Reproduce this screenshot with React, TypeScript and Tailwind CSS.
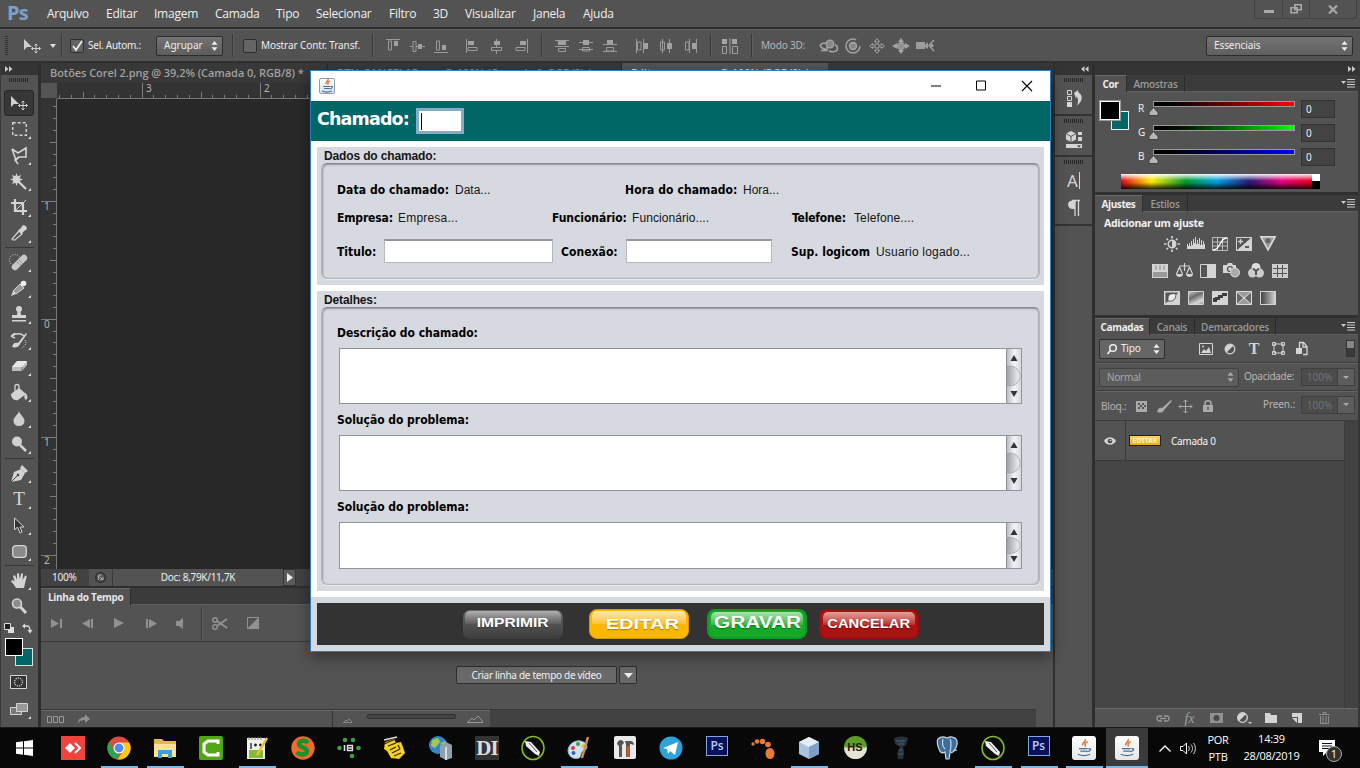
import React from "react";

type P = { children?: React.ReactNode; className?: string };

/* ---------- drawing helpers ---------- */
function Ic({ w = 16, h = 16, className = "", children }: P & { w?: number; h?: number }) {
  return (
    <svg width={w} height={h} viewBox={`0 0 ${w} ${h}`} className={"block shrink-0 overflow-visible " + className} fill="none" stroke="none">
      {children}
    </svg>
  );
}
function Cell({ children, className = "" }: P) {
  return <div className={"flex shrink-0 items-center justify-center " + className}>{children}</div>;
}
function Arrows() {
  return (
    <Ic w={7} h={10}>
      <path d="M3.5 0L6.5 3.8H.5zM3.5 10L.5 6.2h6z" fill="currentColor" />
    </Ic>
  );
}
function Grip({ className = "" }: P) {
  return (
    <Ic w={20} h={4} className={className}>
      {Array.from({ length: 10 }, (_, i) => (
        <path key={i} d={`M${i * 2 + 0.5} 0v4`} stroke="#262626" />
      ))}
    </Ic>
  );
}
function Sep({ className = "" }: P) {
  return <div className={"h-[23px] w-[2px] shrink-0 border-l border-r border-l-[#393939] border-r-[#5e5e5e] " + className} />;
}

/* ---------- menu + options bar ---------- */
const menus: [string, string][] = [
  ["Arquivo", "w-[59px]"], ["Editar", "w-[48px]"], ["Imagem", "w-[61px]"], ["Camada", "w-[61px]"],
  ["Tipo", "w-[40px]"], ["Selecionar", "w-[73px]"], ["Filtro", "w-[44px]"], ["3D", "w-[32px]"],
  ["Visualizar", "w-[68px]"], ["Janela", "w-[50px]"], ["Ajuda", "w-[50px]"],
];

function MenuBar() {
  return (
    <div className="flex h-[29px] shrink-0 border-b-2 border-[#2c2c2c] bg-[#535353]">
      <div className="w-[47px] pl-[7px] font-['Open_Sans',sans-serif] text-[20px] leading-[25px] font-bold tracking-[-0.7px] text-[#7ba2ca]">Ps</div>
      {menus.map(([m, w]) => (
        <div key={m} className={"font-['Open_Sans',sans-serif] text-[12px] leading-[28px] tracking-[-0.25px] whitespace-nowrap text-[#f0f0f0] " + w}>{m}</div>
      ))}
      <div className="mr-[3px] ml-auto flex h-[19px] w-[103px] rounded-b-[3px] border border-t-0 border-[#444] text-[#a9a9a9]">
        <Cell className="w-[28px] border-r border-[#444]"><Ic w={10} h={10}><path d="M0 6h10v3H0z" fill="currentColor" /></Ic></Cell>
        <Cell className="w-[27px] border-r border-[#444]"><Ic w={12} h={10}><path d="M4.8.8h6.4v5H4.8zM1 3.8h6.2v5H1z" stroke="currentColor" strokeWidth="1.6" /></Ic></Cell>
        <Cell className="grow"><Ic w={10} h={9}><path d="M1 .5l8 8M9 .5l-8 8" stroke="currentColor" strokeWidth="2.2" /></Ic></Cell>
      </div>
    </div>
  );
}

const aligns: string[] = [
  "M1 1.5h14 M3.5 3h3v9h-3z|M9 3h4v5H9z",
  "M1 8.5h3 M7 8.5h3M13 8.5h3 M4 3.5h3v10H4z|M9 6h4v5H9z",
  "M1 14.5h14 M3.5 3h3v9h-3z|M9 7h4v5H9z",
  "M1.5 1v14 M3 9.5h9v3H3z|M3 3h6v4H3z",
  "M7.5 1v2M7.5 7v2M7.5 13v3 M2.500 9.500h10v3h-10z|M5 3h6v4H5z",
  "M14.5 1v14 M3 9.500h9v3H3z|M7 3h6v4H7z",
  "M1 2.5h14M1 8.500h14 M4.500 10.500h7v3h-7z|M4 3h8v4H4z",
  "M1 4.500h14M1 11.500h14 M4.500 9.500h7v3.500h-7z|M5 2h6v5H5z",
  "M1 6.500h14M1 13.500h14 M4.500 9.500h7v3.500h-7z|M5 2h6v4H5z",
  "M2.5 1v14M9.5 1v14 M3.500 4h3.500v8H3.500z|M10 5h4v6h-4z",
  "M4.5 1v14M11.500 1v14 M2.500 4h4v8h-4z|M9 5h5v6H9z",
  "M7.5 1v14M14.500 1v14 M3.500 4h3.500v8H3.500z|M10 5h4v6h-4z",
];
function AlignIcon({ i }: { i: number }) {
  const [a, b] = aligns[i].split("|");
  return (
    <Cell className="w-6">
      <Ic><path d={a} stroke="#9b9b9b" /><path d={b} fill="#a2a2a2" /></Ic>
    </Cell>
  );
}
function MoveIcon() {
  return (
    <Ic w={18} h={16}>
      <path d="M1 1v11l3-3h5z" fill="#cfcfcf" />
      <path d="M13 6v9M8.500 10.500h9M11.500 7.500L13 6l1.500 1.500M11.500 13.500L13 15l1.500-1.500M10 9l-1.500 1.500L10 12M16 9l1.500 1.500L16 12" stroke="#cfcfcf" />
    </Ic>
  );
}
function OptionsBar() {
  const t = "font-['Noto_Sans',sans-serif] text-[10px] whitespace-nowrap text-[#ededed] ";
  return (
    <div className="flex h-[34px] shrink-0 items-center border-t border-b-2 border-t-[#646464] border-b-[#303030] bg-[#535353]">
      <Ic w={3} h={20} className="ml-[5px]"><path d="M1.500 0v20" stroke="#333" strokeWidth="3" strokeDasharray="1 1" /></Ic>
      <div className="ml-[15px]"><MoveIcon /></div>
      <Ic w={6} h={4} className="ml-[9px]"><path d="M0 0h6L3 4z" fill="#ddd" /></Ic>
      <Sep className="ml-[5px]" />
      <div className="ml-[7px] flex h-[14px] w-[14px] items-center justify-center rounded-[2px] border border-[#2e2e2e] bg-[#636363]">
        <Ic w={12} h={12}><path d="M2 6l3 4 6-9" stroke="#eee" strokeWidth="1.700" /></Ic>
      </div>
      <div className={t + "ml-[4px] w-[68px] tracking-[-0.25px]"}>Sel. Autom.:</div>
      <div className={t + "flex h-[20px] w-[67px] items-center justify-between rounded-[2px] border border-[#2d2d2d] bg-linear-to-b from-[#737373] to-[#5d5d5d] pr-[4px] pl-[7px]"}>Agrupar<Arrows /></div>
      <Sep className="ml-[9px]" />
      <div className="ml-[9px] h-[14px] w-[14px] rounded-[2px] border border-[#2e2e2e] bg-[#656565]" />
      <div className={t + "ml-[4px] w-[111px] tracking-[-0.1px]"}>Mostrar Contr. Transf.</div>
      <Sep />
      <div className="ml-[7px] flex">{[0, 1, 2].map((i) => <AlignIcon key={i} i={i} />)}</div>
      <div className="ml-[8px] flex">{[3, 4, 5].map((i) => <AlignIcon key={i} i={i} />)}</div>
      <Sep className="ml-[8px]" />
      <div className="ml-[7px] flex">{[6, 7, 8].map((i) => <AlignIcon key={i} i={i} />)}</div>
      <div className="ml-[8px] flex">{[9, 10, 11].map((i) => <AlignIcon key={i} i={i} />)}</div>
      <Sep className="ml-[8px]" />
      <Cell className="ml-[6px] w-6">
        <Ic><path d="M.5 8.500h4v7h-4zM10.500 8.500h5v7h-5zM8 0v16" stroke="#a0a0a0" /><path d="M0 1h5v5H0zM10 1h5v5h-5z" fill="#a5a5a5" /></Ic>
      </Cell>
      <Sep className="ml-[9px]" />
      <div className={t + "ml-[8px] w-[56px] tracking-[-0.2px] !text-[#b5b5b5]"}>Modo 3D:</div>
      <Cell className="w-6"><Ic w={18} h={14}><circle cx="10" cy="5" r="3.800" fill="#888" stroke="#a5a5a5" strokeWidth="1.300" /><path d="M6 4C0 4-1 7 2 9l4 1.500M1 11.500h6v-4M9 12c4 2 9 0 8.500-3C17 7 16 6 15 5.500" stroke="#a5a5a5" strokeWidth="1.500" /></Ic></Cell>
      <Cell className="w-6"><Ic><circle cx="8" cy="8" r="7" stroke="#a0a0a0" strokeWidth="1.600" strokeDasharray="36 8" /><circle cx="8" cy="8" r="3.500" fill="#858585" stroke="#aaa" strokeWidth="1.300" /></Ic></Cell>
      <Cell className="w-6"><Ic><path d="M8 .7L5.500 3.500H7V7H3.500V5.500L.7 8l2.800 2.500V9H7v3.500H5.500L8 15.300l2.500-2.800H9V9h3.500v1.500L15.300 8l-2.800-2.500V7H9V3.500h1.500z" stroke="#a5a5a5" /></Ic></Cell>
      <Cell className="w-6"><Ic w={18}><circle cx="9" cy="8" r="3.500" fill="#909090" stroke="#aaa" /><path d="M9 0L6 4h6zM9 16l-3-4h6zM0 8l5-3v6zM18 8l-5-3v6z" fill="#a2a2a2" /></Ic></Cell>
      <Cell className="w-6"><Ic w={18} h={12}><path d="M0 2h9v7H0zM9 5l3-3v7L9 7z" fill="#9c9c9c" /><path d="M18 0l-5 5.500 5 5.500" stroke="#a5a5a5" strokeWidth="1.300" /><circle cx="16" cy="5.500" r="1.500" fill="#aaa" /></Ic></Cell>
      <div className={t + "mr-[7px] ml-auto flex h-[20px] w-[147px] items-center justify-between rounded-[2px] border border-[#2d2d2d] bg-linear-to-b from-[#747474] to-[#5f5f5f] pr-[4px] pl-[7px] tracking-[-0.1px]"}>Essenciais<Arrows /></div>
    </div>
  );
}

/* ---------- tool palette ---------- */
const G = "#d4d4d4";
const tools: React.ReactNode[] = [
  <MoveIcon />,
  <Ic w={15} h={14}><path d="M.7.700h13.600v12.600H.700z" stroke={G} strokeWidth="1.400" strokeDasharray="3 2" /></Ic>,
  <Ic w={17} h={17}><path d="M1 2l6 4 8-5v9H8L5 13 1 2M8 10l-4 3 3 4" stroke={G} strokeWidth="1.600" /></Ic>,
  <Ic w={18} h={17}><path d="M6.500 0l1.200 3.300L11 2 9.600 5.200 13 6.500 9.600 7.800 11 11 7.700 9.700 6.500 13 5.300 9.700 2 11l1.400-3.200L0 6.500l3.400-1.300L2 2l3.300 1.300z" fill={G} /><path d="M9 9l7 7" stroke={G} strokeWidth="2.200" /></Ic>,
  <Ic><path d="M4 0v12h12M0 4h12v12" stroke={G} strokeWidth="2.200" /><path d="M3 13L15 1" stroke={G} /></Ic>,
  <Ic><path d="M2 15l-1-1 7-8 3 3-7 6z" stroke={G} strokeWidth="1.200" /><path d="M7 5l2-1 3-4 3 1 1 3-4 3-1 2z" fill={G} /></Ic>,
  <Ic w={20} h={17}><circle cx="6" cy="6" r="5.500" stroke={G} strokeDasharray="1 1.500" /><path d="M6 13L15 4" stroke="#c8c8c8" strokeWidth="6.500" strokeLinecap="round" /><path d="M8 8l5 4M10 6l4 4" stroke="#666" strokeDasharray="1 1" /></Ic>,
  <Ic><path d="M0 16l2-5 3 3z" fill={G} /><path d="M2 11l7-7 4 4-8 6z" fill="#999" stroke={G} /><circle cx="12.500" cy="3.500" r="2.800" fill="#eee" /></Ic>,
  <Ic><circle cx="8" cy="3" r="3" fill={G} /><path d="M6.500 5h3l.5 4h5v3H1V9h5zM1 14h14v1.500H1z" fill={G} /></Ic>,
  <Ic w={17}><path d="M1 4c4-3 9-3 12 0M0 4l4-3M0 4l4 2" stroke={G} strokeWidth="1.400" /><path d="M1 15c1-4 3-5 6-4l8-10 1 1-7 10c-1 3-4 4-8 3z" fill={G} /><path d="M14 8c2 3 0 6-3 8" stroke={G} strokeDasharray="1 1.200" /></Ic>,
  <Ic w={17} h={14}><path d="M6 2h10v4l-5 6H1V8z" fill="#bdbdbd" /><path d="M6 2h10l-5 6H1z" fill="#e8e8e8" /><path d="M11 8v4" stroke="#666" /></Ic>,
  <Ic w={18} h={17}><path d="M1 10l8-6 7 6-8 6c-4 1-7-2-7-6z" fill={G} /><path d="M5 9V2c0-2 4-2 4 0v6" stroke={G} strokeWidth="1.300" /><path d="M15 9c3 2 3 5 1 7-2-1-2-4-1-7z" fill={G} /></Ic>,
  <Ic w={12} h={15}><path d="M6 0c1 4 5.500 6 5.500 10A5 5 0 016 15 5 5 0 01.500 10C.500 6 5 4 6 0z" fill="#cfcfcf" /></Ic>,
  <Ic><circle cx="6" cy="5.500" r="5" fill="#cfcfcf" /><path d="M9 9l6 6" stroke={G} strokeWidth="2.500" /></Ic>,
  <Ic w={17} h={17}><path d="M0 17L3 7l7-3 4 4-4 7z" fill={G} /><path d="M0 17l6-6" stroke="#444" /><circle cx="7" cy="10" r="1.300" fill="#444" /><path d="M9 3l2-3 6 6-3 2z" fill={G} /></Ic>,
  <span className="font-['Liberation_Serif',serif] text-[19px] leading-[20px] text-[#d8d8d8]">T</span>,
  <Ic w={12} h={17}><path d="M1.500 1v12l3-3 2.500 6 2-1-2-5h4z" fill="#333" stroke={G} /></Ic>,
  <Ic w={15} h={13}><rect x=".7" y=".7" width="13.600" height="11.600" rx="3" fill="#8a8a8a" stroke={G} strokeWidth="1.300" /></Ic>,
  <Ic w={17} h={17}><path d="M5 16C3 12 1 11 0 9c1-1 3-1 4 1L2 4c1-1 2-1 2.500 0L6 8 6 2c.5-1.500 2-1.500 2 0l.6 5L10 2c.7-1.300 2-1 2 .3L11.500 8 14 4c1-1 2 0 1.500 1.200L13 16z" fill={G} /></Ic>,
  <Ic><circle cx="6" cy="5.500" r="4.500" fill="#8d8d8d" stroke={G} strokeWidth="1.600" /><path d="M9.500 9l5.500 6" stroke={G} strokeWidth="3" /></Ic>,
];
function ToolPalette() {
  return (
    <div className="flex w-[41px] shrink-0 flex-col border-r-[3px] border-l border-r-[#2f2f2f] border-l-[#3a3a3a] bg-[#535353]">
      <div className="h-[12px] bg-[#343434] pt-[3px] pl-[4px]"><Ic w={8} h={6}><path d="M0 0l3.500 3L0 6zM4 0l3.500 3L4 6z" fill="#c8c8c8" /></Ic></div>
      <Grip className="mt-[3px] mb-[8px] ml-[8px]" />
      {tools.map((t, i) => (
        <React.Fragment key={i}>
          {(i === 6 || i === 14 || i === 18) && <div className="mx-[4px] my-[1px] h-px shrink-0 bg-[#363636]" />}
          <div className={"relative mr-[4px] ml-[3px] flex h-[26px] shrink-0 items-center justify-center " + (i === 0 ? "rounded-[3px] border border-[#262626] bg-[#373737]" : "")}>
            {t}
            {i > 0 && i !== 19 && <Ic w={3} h={3} className="absolute right-[3px] bottom-[3px]"><path d="M3 0v3H0z" fill="#ddd" /></Ic>}
          </div>
        </React.Fragment>
      ))}
      <div className="flex h-[16px] shrink-0 items-end justify-between pr-[6px] pb-[2px] pl-[3px]">
        <Ic w={11} h={10}><path d="M4 4h6v6H4z" fill="#ddd" /><path d="M.5.500h6v6h-6z" fill="#222" stroke="#ddd" /></Ic>
        <Ic w={10} h={9}><path d="M2 2h3c2 0 3 1 3 5" stroke="#ddd" strokeWidth="1.300" /><path d="M0 2l3-2.500v5zM5.500 6h5L8 9.500z" fill="#ddd" /></Ic>
      </div>
      <div className="relative h-[33px] shrink-0">
        <div className="absolute top-[13px] left-[14px] h-[18px] w-[18px] border border-[#ddd] bg-[#006666]" />
        <div className="absolute top-[3px] left-[4px] h-[18px] w-[18px] border border-white bg-black" />
      </div>
      <Cell className="h-[27px] pr-[2px]"><Ic w={17} h={14}><path d="M.5.500h16v13H.500z" fill="#333" stroke={G} /><circle cx="8.500" cy="7" r="4" stroke={G} strokeWidth="1.300" strokeDasharray="1.200 1" /></Ic></Cell>
      <Cell className="relative h-[28px] pr-[2px]"><Ic w={18} h={13}><path d="M.5 4.500h11v7H.500z" fill="#777" stroke={G} /><path d="M6.500.500h11v8h-11z" fill="#999" stroke={G} /></Ic><Ic w={3} h={3} className="absolute right-[7px] bottom-[4px]"><path d="M3 0v3H0z" fill="#ddd" /></Ic></Cell>
    </div>
  );
}

/* ---------- document area ---------- */
function HRuler() {
  return (
    <Ic w={980} h={16}>
      <path d="M0 15.500h980" stroke="#777" />
      {Array.from({ length: 24 }, (_, i) => {
        const x = Math.round(3 + i * 11.800) - 0.500;
        const major = i === 7 || i === 17;
        return <path key={i} d={`M${x} 15v${major ? -15 : i === 2 || i === 12 || i === 22 ? -6 : -3}`} stroke="#7c7c7c" />;
      })}
      <text x="89" y="8.500" fontSize="10" fontFamily="Noto Sans" fill="#b5b5b5">3</text>
      <text x="207" y="8.500" fontSize="10" fontFamily="Noto Sans" fill="#b5b5b5">2</text>
    </Ic>
  );
}
function VRuler() {
  return (
    <Ic w={16} h={470}>
      <path d="M15.500 0v470" stroke="#777" />
      {Array.from({ length: 40 }, (_, i) => {
        const y = Math.round(-3 + i * 11.800 - 1.500) + 0.500;
        const k = (i + 1) % 10;
        return y > 0 ? <path key={i} d={`M15 ${y}h${k === 0 ? -15 : k === 5 ? -6 : -3}`} stroke="#7c7c7c" /> : null;
      })}
      {["1", "0", "1", "2"].map((n, i) => (
        <text key={i} x="3" y={111 + i * 118} fontSize="10" fontFamily="Noto Sans" fill="#b5b5b5">{n}</text>
      ))}
    </Ic>
  );
}
function TimelineControls() {
  const c = "#919191";
  return (
    <div className="flex h-[37px] shrink-0 items-center border-b border-[#3a3a3a] text-[#919191]">
      <Cell className="w-[30px]"><Ic w={11} h={9}><path d="M0 0l8 4.500L0 9zM9 0h2v9H9z" fill={c} /></Ic></Cell>
      <Cell className="w-[32px]"><Ic w={11} h={9}><path d="M8 0v9L0 4.500zM9 0h2v9H9z" fill={c} /></Ic></Cell>
      <Cell className="w-[32px]"><Ic w={10} h={10}><path d="M0 0l10 5-10 5z" fill={c} /></Ic></Cell>
      <Cell className="w-[32px]"><Ic w={11} h={9}><path d="M3 0l8 4.500L3 9zM0 0h2v9H0z" fill={c} /></Ic></Cell>
      <Cell className="w-[26px]"><Ic w={8} h={11}><path d="M0 3h3l4-3v11L3 8H0z" fill={c} /></Ic></Cell>
      <Sep className="ml-[8px] !h-[32px]" />
      <Cell className="w-[33px]"><Ic w={16} h={13}><circle cx="3" cy="3" r="2.200" stroke={c} strokeWidth="1.500" /><circle cx="3" cy="10" r="2.200" stroke={c} strokeWidth="1.500" /><path d="M5 4l10 7M5 9l10-7" stroke={c} strokeWidth="2" /></Ic></Cell>
      <Cell className="w-[33px]"><Ic w={12} h={12}><path d="M.5.500h11v11H.500z" stroke={c} /><path d="M12 0v12H0z" fill={c} /></Ic></Cell>
    </div>
  );
}
function DocumentArea() {
  const t = "font-['Noto_Sans',sans-serif] text-[10px] whitespace-nowrap ";
  return (
    <div className="flex w-[1012px] shrink-0 flex-col bg-[#535353]">
      <div className="flex h-[20px] shrink-0 bg-[#383838]">
        <div className="w-[287px] border-r border-[#292929] pl-[9px] font-['Open_Sans',sans-serif] text-[11px] leading-[20px] font-semibold tracking-[-0.06px] whitespace-nowrap text-[#a0a0a0]">Botões Corel 2.png @ 39,2% (Camada 0, RGB/8) *&nbsp; ×</div>
        <div className="w-[294px] border-r border-[#292929] pl-[9px] font-['Open_Sans',sans-serif] text-[11px] leading-[19px] font-semibold tracking-[-0.1px] whitespace-nowrap text-[#909090]">BTN_CANCELAR.png @ 100% (Camada 0, RGB/8) *&nbsp; ×</div>
        <div className="flex w-[206px] justify-between bg-[#535353] pr-[6px] pl-[9px] font-['Open_Sans',sans-serif] text-[11px] leading-[19px] font-semibold tracking-[-0.1px] whitespace-nowrap text-[#ddd]"><span>Editar.png</span><span>@ 100% (RGB/8) *&nbsp; ×</span></div>
      </div>
      <div className="flex h-[16px] shrink-0 bg-[#333]">
        <div className="h-[15px] w-[16px] bg-[#555]" />
        <HRuler />
      </div>
      <div className="flex h-[470px] shrink-0 bg-[#333]">
        <VRuler />
        <div className="grow bg-[#282828]" />
      </div>
      <div className={t + "flex h-[17px] shrink-0 items-center bg-[#424242] text-[#f0f0f0]"}>
        <div className="w-[48px] pl-[11px] tracking-[-0.2px]">100%</div>
        <Cell className="h-full w-[24px] border-r border-[#3a3a3a] bg-[#535353]"><Ic w={11} h={11}><circle cx="5.500" cy="5.500" r="4.800" stroke="#2a2a2a" strokeWidth="1.200" /><path d="M3.500 8V3h3M4.500 4.500l3 3H5.500M8 5v3" stroke="#aaa" /></Ic></Cell>
        <div className="flex h-full w-[170px] items-center justify-center bg-[#535353] tracking-[-0.3px]">Doc: 8,79K/11,7K</div>
        <Cell className="h-full w-[13px] border border-[#353535] bg-[#5c5c5c]"><Ic w={6} h={9}><path d="M0 0l6 4.500L0 9z" fill="#eee" /></Ic></Cell>
      </div>
      <div className="h-[2px] shrink-0 bg-[#2e2e2e]" />
      <div className="flex h-[17px] shrink-0 border-b border-[#5e5e5e] bg-[#3b3b3b]">
        <div className="h-[17px] w-[90px] border-t border-r border-t-[#666] border-r-[#2a2a2a] bg-[#535353] pl-[7px] font-['Open_Sans',sans-serif] text-[10px] leading-[16px] font-bold tracking-[-0.3px] whitespace-nowrap text-[#e6e6e6]">Linha do Tempo</div>
      </div>
      <TimelineControls />
      <div className="flex h-[67px] shrink-0 pt-[24px] pl-[415px]">
        <div className={t + "flex h-[18px] w-[161px] items-center justify-center rounded-[2px] border border-[#2e2e2e] bg-[#696969] tracking-[-0.3px] text-[#f0f0f0]"}>Criar linha de tempo de vídeo</div>
        <Cell className="ml-[2px] h-[18px] w-[18px] rounded-[2px] border border-[#2e2e2e] bg-[#696969]"><Ic w={9} h={5}><path d="M0 0h9L4.500 5z" fill="#eee" /></Ic></Cell>
      </div>
      <div className="mr-[17px] flex h-[18px] grow border-t border-[#363636] bg-[#424242]">
        <div className="flex w-[449px] items-center border-t border-[#686868] bg-[#535353]">
          <Ic w={17} h={7} className="ml-[6px]"><path d="M.5.500h4v6h-4zM6.500.500h4v6h-4zM12.500.500h4v6h-4z" stroke="#999" /></Ic>
          <Ic w={13} h={10} className="ml-[13px]"><path d="M1 10c0-5 3-7 7-7V0l5 5-5 4V6C4 6 2 7 1 10z" fill="#909090" /></Ic>
          <div className="ml-[242px] h-full w-px bg-[#333]" />
          <Ic w={9} h={5} className="mt-[2px] ml-[10px]"><path d="M0 4.500h9M1 4l2-2 1 1 2-2 3 3" stroke="#888" /></Ic>
          <div className="mb-[5px] ml-[15px] h-[5px] w-[89px] rounded-[2px] border border-[#303030] bg-[#444]" />
          <Ic w={16} h={8} className="ml-[11px]"><path d="M0 7.500h16M1 7l4-4 2 2 4-4 5 6" stroke="#999" /></Ic>
        </div>
      </div>
    </div>
  );
}

/* ---------- right side panels ---------- */
function Dock() {
  return (
    <div className="flex w-[42px] shrink-0 flex-col border-r-[3px] border-l-2 border-[#2f2f2f] bg-[#535353]">
      <div className="flex h-[12px] shrink-0 items-center justify-end bg-[#343434] pr-[3px]"><Ic w={8} h={6}><path d="M3.500 0L0 3l3.500 3zM7.500 0L4 3l3.500 3z" fill="#c8c8c8" /></Ic></div>
      <div className="flex h-[41px] flex-col items-center border-b-2 border-[#333] pt-[3px]">
        <Grip />
        <Ic w={16} h={18} className="mt-[8px]"><path d="M1.500.500h4v4h-4zM1.500 6.500h4v4h-4z" stroke={G} /><path d="M1 12h5v5H1z" fill={G} /><path d="M8 3l4-3 .5 2.500c5 3 4 9-1.500 13 1.500-4 1.500-7-.5-9l-.5 2z" fill={G} /></Ic>
      </div>
      <div className="flex h-[41px] flex-col items-center border-b-2 border-[#333] pt-[3px]">
        <Grip />
        <Ic w={16} h={17} className="mt-[8px]"><path d="M5 0l5 2.500v6L5 11 0 8.500v-6z" fill={G} /><path d="M0 2.500l5 3 5-3M5 5.500V11" stroke="#555" /><path d="M12 1h4v3h-4zM12 6h4v4h-4zM0 13h16v4H0z" fill={G} /><path d="M11 14.500h4l-2 2z" fill="#333" /></Ic>
      </div>
      <div className="flex h-[69px] flex-col items-center border-b-2 border-[#333] pt-[3px]">
        <Grip />
        <div className="mt-[8px] flex h-[17px] items-center font-['Noto_Sans',sans-serif] text-[17px] text-[#d4d4d4]">A<span className="ml-px h-[17px] w-px bg-[#d4d4d4]" /></div>
        <Ic w={12} h={16} className="mt-[11px]"><path d="M11 .500H5C2 .500 0 2 0 4.500S2 9 5 9h2V.500z" fill={G} /><path d="M7 0v16M10.500 0v16M4 .500h8" stroke={G} strokeWidth="1.300" /></Ic>
      </div>
    </div>
  );
}
function Tabs({ items }: { items: [string, string][] }) {
  return (
    <div className="flex h-[17px] shrink-0 bg-[#3b3b3b] font-['Open_Sans',sans-serif] text-[10px] leading-[16px] whitespace-nowrap">
      {items.map(([n, w], i) => (
        <div key={n} className={"border-r border-[#2c2c2c] text-center " + w + (i === 0 ? " border-t border-t-[#6a6a6a] bg-[#535353] font-bold tracking-[-0.4px] text-[#eee]" : " border-b border-b-[#5e5e5e] pt-px font-semibold tracking-[-0.25px] text-[#9a9a9a]")}>{n}</div>
      ))}
      <div className="flex grow items-center justify-end border-b border-[#5e5e5e] pr-[3px]">
        <Ic w={14} h={8}><path d="M0 2h5L2.500 5z" fill="#ccc" /><path d="M6 .5h8M6 3h8M6 5.500h8M6 8h8" stroke="#ccc" /></Ic>
      </div>
    </div>
  );
}
function Channel({ l, bar }: { l: string; bar: string }) {
  return (
    <div className="flex h-[24px] items-start font-['Noto_Sans',sans-serif] text-[10px] text-[#eee]">
      <div className="w-[15px] pt-[1px] leading-[14px]">{l}</div>
      <div className="w-[148px]">
        <div className={"mt-[1px] h-[6px] w-[142px] border border-[#9a9a9a] bg-linear-to-r from-black " + bar} />
        <Ic w={11} h={9} className="-ml-[5px]"><path d="M5.500.500l4.500 5v3H1v-3z" fill="#b5b5b5" stroke="#333" strokeWidth=".8" /></Ic>
      </div>
      <div className="h-[18px] w-[34px] border border-[#333] bg-[#434343] pl-[4px] leading-[16px]">0</div>
    </div>
  );
}
const adj: React.ReactNode[][] = [
  [
    <Ic w={18} h={16}><circle cx="9" cy="8" r="3.700" stroke={G} strokeWidth="1.500" /><path d="M9 4a4 4 0 010 8z" fill={G} /><path d="M9 0v2.500M9 13.500V16M1 8h2.500M14.500 8H17M3.500 2.500L5 4M13 12l1.500 1.500M3.500 13.500L5 12M13 4l1.500-1.500" stroke={G} strokeWidth="1.700" /></Ic>,
    <Ic w={18} h={13}><path d="M0 12h18V7h-1V4h-1v4h-1V3h-1v5h-1V1h-1v6h-1V3h-1v4H9V0H8v6H7V2H6v6H5V4H4v5H3V6H2v3H1V7H0z" fill={G} /></Ic>,
    <Ic w={16} h={14}><path d="M.5.500h15v13H.500zM5.500 0v14M10.500 0v14M0 5h16M0 9h16" stroke="#bbb" /><path d="M1 13C9 13 7 1 15 1" stroke="#fff" strokeWidth="1.300" /></Ic>,
    <Ic w={16} h={14}><path d="M.5.500h15v13H.500z" stroke={G} /><path d="M16 0v14H0z" fill={G} /><path d="M2 4.500h5M4.500 2v5" stroke={G} strokeWidth="1.300" /><path d="M9 10h4" stroke="#333" strokeWidth="1.500" /></Ic>,
    <Ic w={16} h={15}><path d="M.8.700h14.400L8 14z" fill="#9a9a9a" stroke="#ddd" strokeWidth="1.500" /><circle cx="8" cy="4.800" r="2.500" fill="#636363" /></Ic>,
  ],
  [
    <Ic w={16} h={14}><path d="M0 0h16v14H0z" fill={G} /><path d="M4 1v5M8 1v5M12 1v5" stroke="#888" /><path d="M1 8h14v5H1z" fill="#999" /></Ic>,
    <Ic w={17} h={15}><path d="M8.500 0v5M3 3h11M3.500 4l-3 7M3.500 4l3 7M13.500 4l-3 7M13.500 4l3 7M8.500 3v5" stroke={G} strokeWidth="1.200" /><path d="M0 11h7c0 4-7 4-7 0zM10 11h7c0 4-7 4-7 0z" fill={G} /></Ic>,
    <Ic w={16} h={14}><path d="M.5.500h15v13H.500z" fill="#555" stroke={G} /><path d="M7 0h9v14H7z" fill={G} /></Ic>,
    <Ic w={18} h={15}><path d="M0 2h4l1-2h4l1 2h3v8H0z" fill={G} /><circle cx="7" cy="6" r="2.500" stroke="#444" strokeWidth="1.200" /><circle cx="12" cy="9.500" r="4.500" fill="#aaa" stroke="#ddd" /></Ic>,
    <Ic w={16} h={15}><circle cx="8" cy="4.500" r="4.500" fill="#ddd" /><circle cx="4.500" cy="10" r="4.500" fill="#ccc" /><circle cx="11.500" cy="10" r="4.500" fill="#ccc" /><path d="M8 12V8M8 8L5 5.500M8 8l3-2.500" stroke="#555" strokeWidth="2" /></Ic>,
    <Ic w={16} h={14}><path d="M0 0h16v14H0z" fill="#ccc" /><path d="M5.500 1v12M10.500 1v12M1 4.500h14M1 9.500h14" stroke="#555" /></Ic>,
  ],
  [
    <Ic w={16} h={14}><path d="M0 0h16v14H0z" fill={G} /><path d="M1.500 1.500h13l-13 11z" fill="#555" /><path d="M4 7c0-4 4-5 8-4 0 5-3 8-8 7z" fill="#eee" stroke="#555" /></Ic>,
    <Ic w={16} h={14}><defs><linearGradient id="bands" x1="0" y1="0" x2=".5" y2=".9" spreadMethod="reflect"><stop offset="0" stopColor="#d0d0d0" /><stop offset=".5" stopColor="#6a6a6a" /><stop offset="1" stopColor="#d8d8d8" /></linearGradient></defs><path d="M.5.500h15v13H.500z" fill="url(#bands)" stroke={G} /></Ic>,
    <Ic w={16} h={14}><path d="M0 0h16v14H0z" fill={G} /><path d="M1 7h2V6h3V4h4V2h5v3h-4v2H8v2H5v2H1z" fill="#3c3c3c" /></Ic>,
    <Ic w={16} h={14}><path d="M0 0h16v14H0z" fill="#999" /><path d="M1 1v12l6-6zM15 1v12L9 7z" fill="#666" /><path d="M.5.500h15v13H.500zM.500.500l15 13M15.500.500l-15 13" stroke="#ddd" /></Ic>,
    <div className="h-[14px] w-[16px] border border-[#d4d4d4] bg-linear-to-r from-[#444] to-[#d0d0d0]" />,
  ],
];
function ColorPanel() {
  return (
    <div className="flex h-[100px] shrink-0 flex-col">
      <div className="flex pt-[8px]">
        <div className="relative ml-[5px] h-[32px] w-[38px]">
          <div className="absolute top-[11px] left-[11px] h-[19px] w-[18px] border border-[#eee] bg-[#006666]" />
          <div className="absolute top-[1px] left-0 h-[19px] w-[20px] border border-white bg-black outline outline-[#999]" />
        </div>
        <div>
          <Channel l="R" bar="to-[#ff0000]" />
          <Channel l="G" bar="to-[#00ff00]" />
          <Channel l="B" bar="to-[#0000ff]" />
        </div>
      </div>
      <div className="mt-[2px] ml-[26px] flex h-[15px] w-[199px]">
        <div className="grow bg-[linear-gradient(to_bottom,rgba(255,255,255,0.95)_0%,transparent_45%,transparent_55%,rgba(0,0,0,0.85)_100%),linear-gradient(to_right,#e2001a_0%,#ffec00_16%,#009a2e_34%,#00a0e3_50%,#2b1a78_67%,#e5007d_84%,#e2001a_100%)]" />
        <div className="w-[8px] bg-black"><div className="h-[7px] bg-white" /></div>
      </div>
    </div>
  );
}
function LayersPanel() {
  const t = "font-['Noto_Sans',sans-serif] text-[10px] whitespace-nowrap ";
  const pct = (
    <div className="flex h-[18px] w-[54px] border border-[#3f3f3f] text-[#727272]">
      <div className="w-[35px] bg-[#4c4c4c] text-center leading-[16px]">100%</div>
      <Cell className="grow border-l border-[#3f3f3f] bg-[#5d5d5d]"><Ic w={6} h={3}><path d="M0 0h6L3 3z" fill="#aaa" /></Ic></Cell>
    </div>
  );
  return (
    <div className={t + "flex grow flex-col"}>
      <div className="flex h-[28px] shrink-0 items-center border-b border-[#3d3d3d] text-[#f0f0f0]">
        <div className="ml-[4px] flex h-[20px] w-[66px] items-center rounded-[2px] border border-[#2d2d2d] bg-[#666] pr-[4px] pl-[7px]">
          <Ic w={10} h={10}><circle cx="6" cy="4" r="3.300" stroke="#eee" strokeWidth="1.500" /><path d="M3.500 6.500L.500 10" stroke="#eee" strokeWidth="1.800" /></Ic>
          <span className="mr-auto ml-[4px] tracking-[-0.2px]">Tipo</span><Arrows />
        </div>
        <Cell className="ml-[29px] w-6"><Ic w={14} h={12}><path d="M.5.500h13v11H.500z" stroke={G} /><path d="M2 10l3-4 2 2 3-4 2 6z" fill={G} /><circle cx="4" cy="3.500" r="1" fill={G} /></Ic></Cell>
        <Cell className="w-6"><Ic w={12} h={12}><circle cx="6" cy="6" r="4.800" stroke={G} strokeWidth="1.300" /><path d="M9.500 2.500A5 5 0 002.500 9.500z" fill={G} /></Ic></Cell>
        <Cell className="w-6"><span className="font-['Liberation_Serif',serif] text-[16px] font-bold text-[#d4d4d4]">T</span></Cell>
        <Cell className="w-6"><Ic w={13} h={13}><path d="M2 2h9v9H2zM.500.500h3v3h-3zM9.500.500h3v3h-3zM.500 9.500h3v3h-3zM9.500 9.500h3v3h-3z" stroke={G} /></Ic></Cell>
        <Cell className="w-6"><Ic w={12} h={13}><path d="M3.500 7V.500h4l3.500 4v8H7M7 .500V5h4" stroke={G} strokeWidth="1.300" /><path d="M0 6h6v6H0z" fill={G} /></Ic></Cell>
        <div className="mr-[3px] ml-auto h-[17px] w-[9px] border border-[#333] bg-[#3a3a3a]"><div className="h-[7px] bg-[#888]" /></div>
      </div>
      <div className="flex h-[28px] shrink-0 items-center border-t border-b border-t-[#666] border-b-[#3d3d3d] text-[#a6a6a6]">
        <div className="ml-[4px] flex h-[19px] w-[140px] items-center justify-between rounded-[2px] border border-[#404040] bg-[#5c5c5c] pr-[4px] pl-[7px] tracking-[-0.3px]">Normal<Arrows /></div>
        <div className="w-[62px] pb-px pl-[5px] tracking-[-0.3px] text-[#b5b5b5]">Opacidade:</div>
        {pct}
      </div>
      <div className="flex h-[30px] shrink-0 items-center border-t border-b border-t-[#666] border-b-[#3d3d3d] text-[#b5b5b5]">
        <div className="w-[34px] pl-[6px] tracking-[-0.2px]">Bloq.:</div>
        <Cell className="w-[25px]"><Ic w={11} h={11}><path d="M0 0h11v11H0z" fill="#aaa" /><path d="M2 2h2v2H2zM6 2h2v2H6zM4 4h2v2H4zM8 4h2v2H8zM2 6h2v2H2zM6 6h2v2H6z" fill="#555" /></Ic></Cell>
        <Cell className="w-[20px]"><Ic w={15} h={13}><path d="M0 12c1-4 3-5 5-4l9-8 1 1-8 9c-1 3-4 3-7 2z" fill="#aaa" /></Ic></Cell>
        <Cell className="w-[23px]"><Ic w={13} h={13}><path d="M6.500 0v13M0 6.500h13M4.500 2l2-2 2 2M4.500 11l2 2 2-2M2 4.500l-2 2 2 2M11 4.500l2 2-2 2" stroke="#aaa" /></Ic></Cell>
        <Cell className="w-[22px]"><Ic w={10} h={12}><path d="M0 5h10v7H0z" fill="#aaa" /><path d="M2 5V3c0-3 6-3 6 0v2" stroke="#aaa" strokeWidth="1.500" /><path d="M5 7v3" stroke="#555" strokeWidth="1.500" /></Ic></Cell>
        <div className="ml-[44px] w-[38px] pb-[3px] tracking-[-0.1px]">Preen.:</div>
        <div className="pb-[3px]">{pct}</div>
      </div>
      <div className="flex grow bg-[#464646]">
        <div className="flex grow flex-col">
          <div className="flex h-[40px] items-center border-b border-[#3a3a3a] bg-[#535353] text-[#f4f4f4]">
            <Cell className="h-full w-[31px] border-r border-[#3a3a3a]"><Ic w={12} h={8}><path d="M0 4c3-5 9-5 12 0-3 5-9 5-12 0z" fill={G} /><circle cx="6" cy="4" r="2.300" fill="#444" /><circle cx="6.500" cy="3.300" r=".9" fill="#ddd" /></Ic></Cell>
            <div className="ml-[3px] flex h-[11px] w-[32px] items-center justify-center border border-[#1f1f1f] bg-linear-to-b from-[#ffd25a] to-[#f5ab00] text-[7px] leading-[7px] font-bold text-[#fff3c8]">EDITAR</div>
            <div className="ml-[10px] pt-px tracking-[-0.3px]">Camada 0</div>
          </div>
        </div>
        <div className="w-[14px] border-l border-[#3c3c3c] bg-[#424242]" />
      </div>
      <div className="flex h-[19px] shrink-0 items-center border-t border-[#6a6a6a] pl-[54px]">
        <Cell className="w-[27px]"><Ic w={14} h={7}><path d="M6 1H3.500a2.500 2.500 0 000 5H6M8 1h2.500a2.500 2.500 0 010 5H8M4 3.500h6" stroke="#999" strokeWidth="1.300" /></Ic></Cell>
        <Cell className="w-[27px] font-['Liberation_Serif',serif] text-[14px] text-[#a0a0a0] italic">fx</Cell>
        <Cell className="w-[27px]"><Ic w={13} h={10}><path d="M0 0h13v10H0z" fill="#909090" /><circle cx="6.500" cy="5" r="3" fill="#484848" /></Ic></Cell>
        <Cell className="w-[27px]"><Ic w={14} h={12}><circle cx="5.500" cy="5.500" r="4.800" stroke={G} strokeWidth="1.300" /><path d="M9 2A5 5 0 002 9z" fill={G} /><path d="M11 10h4l-2 2z" fill={G} /></Ic></Cell>
        <Cell className="w-[27px]"><Ic w={12} h={10}><path d="M0 0h5l1 2h6v8H0z" fill={G} /></Ic></Cell>
        <Cell className="w-[27px]"><Ic w={11} h={11}><path d="M0 0h10v10H6V4H0z" fill={G} /><path d="M0 5h5v5z" fill={G} /></Ic></Cell>
        <Cell className="w-[27px]"><Ic w={11} h={12}><path d="M0 2.500h11M4 2V.500h3V2M1.500 4v7.500h8V4M4 4v7M7 4v7" stroke="#8c8c8c" /></Ic></Cell>
      </div>
    </div>
  );
}
function RightPanels() {
  return (
    <div className="flex grow flex-col border-r-2 border-[#383838] bg-[#535353]">
      <div className="flex h-[12px] shrink-0 items-center justify-end bg-[#343434] pr-[2px]"><Ic w={8} h={6}><path d="M0 0l3.500 3L0 6zM4 0l3.500 3L4 6z" fill="#c8c8c8" /></Ic></div>
      <Tabs items={[["Cor", "w-[32px]"], ["Amostras", "w-[58px]"]]} />
      <ColorPanel />
      <div className="h-[3px] shrink-0 bg-[#303030]" />
      <Tabs items={[["Ajustes", "w-[48px]"], ["Estilos", "w-[45px]"]]} />
      <div className="flex h-[106px] shrink-0 flex-col border-b-[3px] border-[#303030]">
        <div className="mt-[4px] ml-[9px] font-['Open_Sans',sans-serif] text-[10.500px] leading-[14px] font-bold tracking-[-0.3px] whitespace-nowrap text-[#f2f2f2]">Adicionar um ajuste</div>
        {adj.map((r, i) => (
          <div key={i} className={"flex h-[27px] " + (i === 1 ? "ml-[53px]" : "ml-[65px]")}>
            {r.map((ic, k) => <Cell key={k} className="w-6">{ic}</Cell>)}
          </div>
        ))}
      </div>
      <Tabs items={[["Camadas", "w-[55px]"], ["Canais", "w-[45px]"], ["Demarcadores", "w-[81px]"]]} />
      <LayersPanel />
    </div>
  );
}

/* ---------- dialog window ---------- */
function Java({ className = "" }: P) {
  return (
    <Ic w={16} h={16} className={className}>
      <path d="M9 1c1 2-3 3-2 5M11 3c-3 1-2 2-2 4" stroke="#e2683c" strokeWidth="1.300" />
      <path d="M4 8.500h7M5 10.500h5.500M11.500 8.500c3-.5 2 2-1 2.500M3 13c3 1.300 7 1.300 10 0" stroke="#4a708f" strokeWidth="1.200" />
    </Ic>
  );
}
function L({ children, className = "" }: P) {
  return <span className={"shrink-0 font-['DejaVu_Sans_Condensed','DejaVu_Sans',sans-serif] text-[12px] font-bold whitespace-nowrap text-black " + className}>{children}</span>;
}
function V({ children, className = "" }: P) {
  return <span className={"shrink-0 font-['Liberation_Sans',sans-serif] text-[12px] whitespace-nowrap text-[#151515] " + className}>{children}</span>;
}
function Field({ className = "" }: P) {
  return <div className={"-mt-[2px] h-[24px] shrink-0 border border-t-2 border-[#b5b8be] border-t-[#94979d] bg-white " + className} />;
}
function TextArea({ label, h, area }: { label: string; h: number; area: string }) {
  return (
    <div className="flex flex-col">
      <div className="flex h-[29px] items-center pb-[2px] pl-[15px]"><L className="tracking-[-0.02px]">{label}</L></div>
      <div className={"ml-[17px] flex w-[683px] border border-[#8f939b] bg-white " + area}>
        <div className="grow" />
        <div className="w-[15px] overflow-hidden border-l border-[#8f939b] bg-[#dfe1e6]">
          <Ic w={14} h={h}>
            <defs>
              <linearGradient id="knob" x1="0" x2="1" y1="0" y2="0"><stop offset="0" stopColor="#6f737b" /><stop offset="1" stopColor="#f4f5f7" /></linearGradient>
              <linearGradient id="track" x1="0" x2="1" y1="0" y2="0"><stop offset="0" stopColor="#b9bcc2" /><stop offset=".5" stopColor="#f2f3f5" /><stop offset="1" stopColor="#d6d9df" /></linearGradient>
            </defs>
            <rect width="14" height={h} fill="url(#track)" />
            <path d="M7 6l3.500 6h-7z" fill="#333" />
            <path d={`M7 ${h - 6}l3.500-6h-7z`} fill="#333" />
            <ellipse cx="3" cy={h / 2} rx="10" ry={h > 50 ? 10 : 8} fill="url(#knob)" stroke="#9a9da3" strokeWidth=".7" />
          </Ic>
        </div>
      </div>
    </div>
  );
}
function Btn({ children, className = "", shine = "" }: P & { shine?: string }) {
  return (
    <div className={"relative flex shrink-0 items-center justify-center overflow-hidden font-['Liberation_Sans',sans-serif] font-bold whitespace-nowrap text-white [text-shadow:0_1px_1px_rgba(0,0,0,0.35)] " + className}>
      <div className={"absolute inset-x-[2px] top-[1px] h-[13px] rounded-t-[5px] bg-linear-to-b " + shine} />
      <span className="relative inline-block">{children}</span>
    </div>
  );
}
const groove = "flex flex-col rounded-[6px] border border-[#b4b7bd] border-t-[#82858b] shadow-[inset_1px_1px_2px_rgba(0,0,0,0.3),inset_-1px_0_1px_rgba(0,0,0,0.18),0_1px_0_#e8eaee]";

function Dialog() {
  return (
    <div className="absolute top-[70px] left-[310px] flex h-[582px] w-[741px] flex-col border border-[#2b7fc7] bg-white shadow-[0_5px_14px_rgba(0,0,0,0.4)]">
      <div className="flex h-[30px] shrink-0 items-center">
        <div className="ml-[8px] flex h-[16px] w-[16px] items-center justify-center rounded-[2px] border border-[#8b9eb3] bg-linear-to-b from-white to-[#dbe3ea]"><Java /></div>
        <div className="ml-auto flex text-black">
          <Cell className="w-[45px] pl-px"><Ic w={11} h={11}><path d="M0 5h10" stroke="#000" /></Ic></Cell>
          <Cell className="w-[46px]"><Ic w={11} h={11}><path d="M.5 0h9v9h-9z" stroke="#000" /></Ic></Cell>
          <Cell className="w-[46px] pr-px"><Ic w={10} h={10}><path d="M0 0l10 10M10 0L0 10" stroke="#000" strokeWidth="1.100" /></Ic></Cell>
        </div>
      </div>
      <div className="flex h-[40px] shrink-0 items-center bg-[#006666] pl-[6px]">
        <div className="w-[99px] pb-[3px] font-['DejaVu_Sans',sans-serif] text-[17.500px] font-bold tracking-[-0.85px] text-white">Chamado:</div>
        <div className="h-[26px] w-[48px] border-[3px] border-[#86abc4] bg-white pt-[2px] pl-[2px]"><div className="h-[17px] w-px bg-black" /></div>
      </div>
      <div className="mx-[6px] mt-[6px] flex h-[138px] shrink-0 flex-col bg-[#d6d9df] px-[4px] pb-[6px]">
        <div className="h-[16px] pl-[3px]"><V className="block leading-[18px] font-bold tracking-[-0.14px]">Dados do chamado:</V></div>
        <div className={groove + " grow pt-[12px] pl-[15px]"}>
          <div className="flex h-[28px] items-center">
            <L className="w-[118px] tracking-[0.09px]">Data do chamado:</L><V className="w-[170px]">Data...</V>
            <L className="w-[118px] tracking-[0.09px]">Hora do chamado:</L><V>Hora...</V>
          </div>
          <div className="flex h-[28px] items-center">
            <L className="w-[61px] tracking-[-0.15px]">Empresa:</L><V className="w-[154px] tracking-[0.2px]">Empresa...</V>
            <L className="w-[80px] tracking-[-0.05px]">Funcionário:</L><V className="w-[160px] tracking-[0.07px]">Funcionário....</V>
            <L className="w-[62px] tracking-[-0.2px]">Telefone:</L><V className="tracking-[0.12px]">Telefone....</V>
          </div>
          <div className="flex h-[40px] items-center">
            <L className="w-[47px]">Titulo:</L><Field className="w-[169px]" />
            <L className="ml-[8px] w-[65px] tracking-[0.05px]">Conexão:</L><Field className="w-[146px]" />
            <L className="ml-[19px] w-[85px] tracking-[0.03px]">Sup. logicom</L><V className="tracking-[0.2px]">Usuario logado...</V>
          </div>
        </div>
      </div>
      <div className="mx-[6px] mt-[6px] flex h-[300px] shrink-0 flex-col bg-[#d6d9df] px-[4px] pb-[6px]">
        <div className="h-[16px] pl-[3px]"><V className="block leading-[18px] font-bold tracking-[-0.14px]">Detalhes:</V></div>
        <div className={groove + " grow gap-[2px] pt-[11px]"}>
          <TextArea label="Descrição do chamado:" h={54} area="h-[56px]" />
          <TextArea label="Solução do problema:" h={54} area="h-[56px]" />
          <TextArea label="Solução do problema:" h={45} area="h-[47px]" />
        </div>
      </div>
      <div className="mt-[6px] flex grow bg-[#d6d9df] p-[6px]">
        <div className="flex grow bg-[#333] pl-[146px]">
          <Btn shine="from-[#b0b0b0] to-[#5c5c5c]" className="mt-[7px] h-[29px] w-[100px] rounded-[7px] bg-linear-to-b from-[#666] to-[#3d3d3d] pb-[4px] text-[12px]"><span className="inline-block scale-x-[1.300]">IMPRIMIR</span></Btn>
          <Btn shine="from-[#ffe9a8] to-[#fcc231]" className="mt-[6px] ml-[26px] h-[30px] w-[100px] rounded-[8px] border border-[#d99a00] bg-[#fbb800] pl-[6px] text-[15px]"><span className="inline-block scale-x-[1.340]">EDITAR</span></Btn>
          <Btn shine="from-[#a6e3ae] to-[#2fb841]" className="mt-[6px] ml-[18px] h-[30px] w-[100px] rounded-[8px] border-2 border-[#0f9a22] bg-[#12aa27] pb-[2px] text-[16px]"><span className="inline-block scale-x-[1.300]">GRAVAR</span></Btn>
          <Btn shine="from-[#e2a0a0] to-[#b82c2c]" className="mt-[6px] ml-[12px] h-[30px] w-[100px] rounded-[7px] border-2 border-[#980f0f] bg-[#ac1212] text-[12px]"><span className="inline-block scale-x-[1.230]">CANCELAR</span></Btn>
        </div>
      </div>
    </div>
  );
}

/* ---------- taskbar ---------- */
const PsI = <div className="mb-[3px] h-[20px] w-[22px] border border-[#7aa9e0] bg-[#0b0f5c] text-center font-['Open_Sans',sans-serif] text-[12px] leading-[17px] font-semibold text-[#b0d0ff]">Ps</div>;
const CorelI = <Ic w={24} h={24}><ellipse cx="12" cy="12" rx="11" ry="11.500" fill="#0b0b0b" stroke="#85bd24" strokeWidth="1.500" /><path d="M4 5l6 1 9 10-1 4-4-2L5 10z" fill="#eee" /><path d="M8 7l8 9" stroke="#555" /></Ic>;
const JavaI = <div className="flex h-[24px] w-[24px] items-center justify-center rounded-[3px] bg-linear-to-b from-white to-[#e4e6e9]"><svg width="20" height="20" viewBox="0 0 16 16" fill="none"><path d="M9 1c1 2-3 3-2 5M11 3c-3 1-2 2-2 4" stroke="#e2783c" strokeWidth="1.300" /><path d="M4 8.500h7M5 10.500h5.500M11.500 8.500c3-.5 2 2-1 2.500M3 13c3 1.300 7 1.300 10 0" stroke="#4a708f" /></svg></div>;
const apps: [React.ReactNode, boolean][] = [
  [<Ic w={24} h={24}><path d="M0 0h24v24H0z" fill="#ef443b" /><path d="M9 7l5 5-5 5-5-5z" fill="#fff" /><path d="M14 7l5 5-5 5" stroke="#fff" strokeWidth="2" /></Ic>, false],
  [<Ic w={24} h={24}><circle cx="12" cy="12" r="11.500" fill="#dd4b3e" /><path d="M2 6l5.500 9.500L12 17l-1.500 6.400A11.500 11.500 0 012 6z" fill="#2ea24f" /><path d="M12 6.500h10.200A11.500 11.500 0 0110.500 23.400L17 14z" fill="#fbc916" /><circle cx="12" cy="12" r="5.500" fill="#fff" /><circle cx="12" cy="12" r="4.400" fill="#4a8af4" /></Ic>, true],
  [<Ic w={22} h={22}><path d="M0 2h8l2 2h12v16H0z" fill="#e5b84c" /><path d="M0 7h22v13H0z" fill="#fbe29a" /><path d="M4 21v-8h14v8h-4v-4H8v4z" fill="#3f9fdd" /></Ic>, true],
  [<Ic w={24} h={24}><rect width="24" height="24" rx="2" fill="#50a814" /><path d="M19 8V5H9L5 8v8l4 3h10v-3" stroke="#fff" strokeWidth="3" /></Ic>, false],
  [<Ic w={22} h={24}><path d="M1 2h18v21H1z" fill="#eef1ea" /><path d="M3 14h14v8H3z" fill="#83bb35" /><path d="M3 1v3M6 1v3M9 1v3M12 1v3M15 1v3" stroke="#888" /><path d="M5 7v6M8 9h3M9.500 7.500v3M13 9h3M14.500 7.500v3" stroke="#222" strokeWidth="1.300" /><path d="M21 2L11 19" stroke="#e8c531" strokeWidth="2.500" /></Ic>, true],
  [<Ic w={24} h={24}><circle cx="12" cy="12" r="11.700" fill="#ef6a2c" /><path d="M17 7c-3-4-9-2-9 1 0 4 8 3 8 7 0 4-7 5-10 1" stroke="#16932b" strokeWidth="4.500" /></Ic>, false],
  [<Ic w={24} h={24}><g fill="#3f9d46"><circle cx="8" cy="4" r="2.300" /><circle cx="16" cy="4" r="2.300" /><circle cx="2.500" cy="12" r="2.300" /><circle cx="21.500" cy="12" r="2.300" /><circle cx="15" cy="20" r="2.300" /></g><path d="M7.500 9v6" stroke="#ddd" strokeWidth="1.600" /><path d="M10.500 9.500h5v5h-5zM10.500 12h5" stroke="#ddd" strokeWidth="1.400" /></Ic>, false],
  [<Ic w={24} h={24}><path d="M2 6l9-3 2 4 5-1 2 5 2 6-6 6-8-1-4-7-3-2z" fill="#f6d120" /><path d="M1 8L15 2M5 10l8-3M7 14l6-3M9 17l8-4M15 9l2 4M11 20l7-3" stroke="#332a00" strokeWidth="1.300" /><path d="M1 4L14 1" stroke="#ddd" strokeWidth="1.500" /></Ic>, false],
  [<Ic w={24} h={24}><circle cx="9" cy="9" r="9" fill="#3586c9" /><path d="M3 4l6-2 2 4-5 6-4-2zM11 7l6-2v6z" fill="#a4c94b" /><path d="M11 9l6-3 6 3v13l-6 2-6-3z" fill="#8fa0ad" /><path d="M17 11v13" stroke="#d5dce0" strokeWidth="2" /></Ic>, false],
  [<div className="h-[24px] w-[24px] bg-[#333] text-center font-['Liberation_Serif',serif] text-[21px] leading-[24px] font-bold tracking-[-1px] text-[#ddd]">DI</div>, false],
  [CorelI, false],
  [<Ic w={24} h={24}><path d="M1 14C2 6 12 2 18 7c4 4 1 8-2 8-3 1-1 5-4 7-6 2-11-2-11-8z" fill="#cfe3ef" stroke="#8fb0c4" /><circle cx="6" cy="12" r="2" fill="#d43a35" /><circle cx="11" cy="8" r="2" fill="#3d9a3a" /><circle cx="16" cy="10" r="1.800" fill="#e8b92b" /><circle cx="6.500" cy="17" r="2" fill="#2f62b8" /><path d="M21 1l-6 21" stroke="#cf8f45" strokeWidth="2.500" /></Ic>, true],
  [<Ic w={22} h={24}><rect width="22" height="23" rx="2" fill="#e9eaeb" /><path d="M3 8c1-5 6-5 7-1l-2 2v12H5V10zM11 5h5c3 0 4 2 4 4l-3-1h-1v13h-4V8z" fill="#555" /><path d="M12.500 10h3.500v11h-3.500z" fill="#cb5327" /></Ic>, false],
  [<Ic w={24} h={24}><circle cx="12" cy="12" r="11.500" fill="#2da2dd" /><path d="M4 12l15-6-3 13-5-4-2 3-1-5z" fill="#fff" /></Ic>, false],
  [PsI, false],
  [<Ic w={24} h={24}><g fill="#e87a35"><ellipse cx="19" cy="17.500" rx="4.500" ry="5.500" /><circle cx="17" cy="8.500" r="2.800" /><circle cx="11.500" cy="5.500" r="2.800" /><circle cx="6" cy="5.500" r="2.200" /><circle cx="2" cy="8" r="1.700" /></g></Ic>, false],
  [<Ic w={22} h={24}><path d="M11 1l10 5v12l-10 5L1 18V6z" fill="#aac3e0" /><path d="M11 1l10 5-10 5L1 6z" fill="#e5eef7" /><path d="M11 11l10-5v12l-10 5z" fill="#7f9fc6" /></Ic>, true],
  [<div className="h-[23px] w-[23px] rounded-full bg-linear-to-b from-[#5d9c27] from-45% to-[#e4e4d4] to-55% text-center font-['Liberation_Sans',sans-serif] text-[11px] leading-[23px] font-bold text-[#2a1600]">HS</div>, false],
  [<Ic w={20} h={24}><path d="M3 2c5-2 10-2 14 0l-2 7-3 2 1 6-1 6H7l-1-6 3-6-5-3z" fill="#26333f" /><path d="M5 5h9M7 8h6M8 14h4M8 18h4" stroke="#405464" strokeWidth="1.300" /></Ic>, false],
  [<Ic w={24} h={24}><path d="M3 3c3-3 7-2 9-1 4-2 9-1 10 3s-2 9-4 11l-3 1-1 6h-3l-1-7c-3 2-5 0-6-3S1 6 3 3z" fill="#3b6e9c" stroke="#cbd8e4" strokeWidth="1.200" /><path d="M8 3c-1 4 0 8 2 10M15 3c2 4 1 7 0 13M18 15l4-1" stroke="#cbd8e4" strokeWidth="1.200" /></Ic>, false],
  [CorelI, true],
  [PsI, true],
  [JavaI, true],
];
function Taskbar() {
  const t = "font-['Open_Sans',sans-serif] text-[11px] leading-[17px] tracking-[-0.25px] text-white text-center whitespace-nowrap ";
  return (
    <div className="flex h-[41px] shrink-0 border-t border-[#1b1b1b] bg-[#080808]">
      <Cell className="w-[50px] pr-[2px]"><Ic w={17} h={16}><path d="M0 2.300l7-1v6.200H0zM8 1.200L17 0v7.500H8zM0 8.500h7v6.200l-7-1zM8 8.500h9V16l-9-1.200z" fill="#fff" /></Ic></Cell>
      {apps.map(([a, run], i) => (
        <div key={i} className={"relative flex shrink-0 items-center justify-center pb-px " + (i > 20 ? "w-[45px]" : "w-[46px]")}>
          {a}
          {run && <div className="absolute bottom-0 left-[5px] h-[2px] w-[37px] bg-[#76b9ed]" />}
        </div>
      ))}
      <Cell className="relative w-[42px] bg-[#3a3a3a] pb-px">{JavaI}<div className="absolute inset-x-0 bottom-0 h-[2px] bg-[#76b9ed]" /></Cell>
      <Cell className="ml-[6px] w-[22px]"><Ic w={12} h={7}><path d="M.5 6.500L6 1l5.500 5.500" stroke="#fff" strokeWidth="1.300" /></Ic></Cell>
      <Cell className="w-[24px]"><Ic w={16} h={13}><path d="M.5 4.500H3L6.500 1v11L3 8.500H.500z" stroke="#fff" /><path d="M8.500 4c1 1.500 1 3.500 0 5M11 2.500c2 2.500 2 5.500 0 8M13.500 1c2.500 3.500 2.500 7.500 0 11" stroke="#ddd" /></Ic></Cell>
      <div className={t + "w-[36px] pt-[3px]"}>POR<br />PTB</div>
      <div className={t + "w-[71px] pt-[2px]"}>14:39<br />28/08/2019</div>
      <div className="relative ml-[10px] w-[38px] pt-[12px] pl-[2px]">
        <Ic w={16} h={16}><path d="M0 0h16v12H8l-4 4v-4H0z" fill="#fff" /><path d="M3 3.500h10M3 6h10M3 8.500h7" stroke="#111" /></Ic>
        <div className="absolute top-[18px] left-[9px] h-[16px] w-[16px] rounded-full border border-[#aaa] bg-[#303030] text-center font-['Open_Sans',sans-serif] text-[11px] leading-[14px] text-white">1</div>
      </div>
    </div>
  );
}

export default function App() {
  return (
    <div className="relative flex h-[768px] w-[1360px] flex-col overflow-hidden bg-[#535353]">
      <MenuBar />
      <OptionsBar />
      <div className="flex h-[664px] shrink-0">
        <ToolPalette />
        <DocumentArea />
        <Dock />
        <RightPanels />
      </div>
      <Taskbar />
      <Dialog />
    </div>
  );
}
